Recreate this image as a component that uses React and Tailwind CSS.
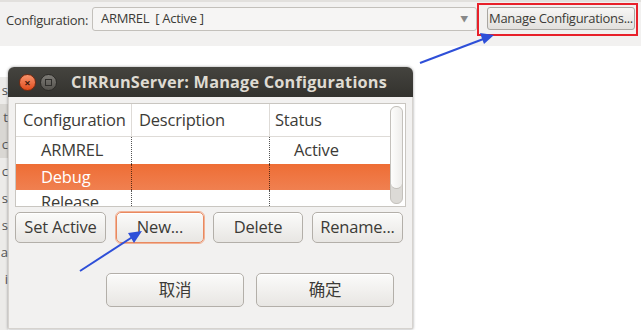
import React from 'react';

const font = { fontFamily: '"Open Sans", "Noto Sans CJK SC", sans-serif' };

function Btn({ children, className = '', focused = false }) {
  return (
    <button
      type="button"
      className={`h-[31px] rounded-[5px] border bg-gradient-to-b from-[#fbfbfa] to-[#e8e6e3] text-[16.5px] tracking-[-0.2px] text-[#3c3b37] shadow-[0_1px_0_#fff_inset] ${
        focused ? 'border-[#e9895f] outline outline-1 outline-[#f1b195]' : 'border-[#b3afa9]'
      } ${className}`}
    >
      {children}
    </button>
  );
}

function Arrows() {
  return (
    <svg className="absolute inset-0 pointer-events-none" width="641" height="330">
      <line x1="420" y1="63" x2="486" y2="38" stroke="#2e4fd8" strokeWidth="2" />
      <polygon points="494,35 480,33 484,44" fill="#2e4fd8" />
      <line x1="80" y1="271" x2="134" y2="236" stroke="#2e4fd8" strokeWidth="2" />
      <polygon points="142,231 128,233 134,243" fill="#2e4fd8" />
    </svg>
  );
}

export default function App() {
  return (
    <div className="relative w-[641px] h-[330px] overflow-hidden bg-white" style={font}>
      {/* eclipse property strip */}
      <div className="h-[46px] bg-[#f2f1f0] border-t-2 border-[#e2e0dd] flex items-start pt-[1px] text-[13px] tracking-[-0.3px] text-[#3c3b37]">
        <span className="ml-[6px] w-[86px] mt-[8px]">Configuration:</span>
        <div className="mt-[4px] w-[385px] h-[24px] rounded-[3px] border border-[#c3c0bb] bg-[#f6f5f4] flex items-center pl-[8px] pr-[8px]">
          <span className="flex-1">ARMREL&nbsp;&nbsp;[ Active ]</span>
          <span className="text-[8px] text-[#888]">▼</span>
        </div>
        <div className="border-2 border-[#e8202a] pl-[8px] pr-[1px] pt-[2px] pb-[4px]">
          <div className="h-[23px] w-[148px] rounded-[3px] border border-[#a9a6a1] bg-gradient-to-b from-[#f7f6f5] to-[#e2e0dd] flex items-center justify-center whitespace-nowrap">
            Manage Configurations...
          </div>
        </div>
      </div>

      <div className="flex mt-[21px]">
        {/* window behind, barely visible */}
        <div className="w-[8px] h-[262px] mt-[10px] bg-[#ecebe9] text-[13px] leading-[27px] text-[#555] flex flex-col items-end">
          <span>s</span>
          <span className="bg-[#d9d7d3] w-full text-right">t</span>
          <span className="bg-[#d9d7d3] w-full text-right">c</span>
          <span>c</span>
          <span>s</span>
          <span>s</span>
          <span>a</span>
          <span>i</span>
        </div>

        {/* dialog */}
        <div className="w-[405px] h-[262px] flex flex-col rounded-t-[6px] overflow-hidden shadow-[0_0_3px_rgba(0,0,0,0.4)]">
          <div className="h-[30px] shrink-0 flex items-center bg-gradient-to-b from-[#45443f] to-[#33322e] px-[11px]">
            <span className="w-[17px] h-[17px] rounded-full bg-gradient-to-b from-[#f7936b] to-[#df4a16] border border-[#7a2a10] flex items-center justify-center text-[11px] font-bold leading-none text-[#3a1a0e]">
              ×
            </span>
            <span className="ml-[4px] w-[17px] h-[17px] rounded-full bg-gradient-to-b from-[#7d7b76] to-[#55534e] border border-[#2c2b28] flex items-center justify-center">
              <span className="w-[7px] h-[7px] border border-[#2f2e2b]" />
            </span>
            <span className="ml-[14px] text-[16.3px] font-bold tracking-[0.2px] text-[#dfdbd2] whitespace-nowrap">
              CIRRunServer: Manage Configurations
            </span>
          </div>

          <div className="flex-1 bg-[#f2f1f0] border-l border-r border-b border-[#d6d3cf] px-[6px] pt-[6px]">
            <div className="h-[104px] border border-[#c9c6c1] bg-white flex overflow-hidden">
              <div className="flex-1 text-[16.5px] tracking-[-0.2px] text-[#3c3b37]">
                <div className="h-[33px] flex border-b border-[#dedbd7]">
                  <div className="w-[116px] pl-[7px] flex items-center border-r border-[#dedbd7] whitespace-nowrap">
                    Configuration
                  </div>
                  <div className="w-[138px] pl-[7px] flex items-center border-r border-[#dedbd7]">Description</div>
                  <div className="flex-1 pl-[5px] flex items-center">Status</div>
                </div>
                <div className="h-[27px] flex">
                  <div className="w-[116px] pl-[25px] flex items-center border-r border-dotted border-[#555]">ARMREL</div>
                  <div className="w-[138px] border-r border-dotted border-[#555]" />
                  <div className="flex-1 pl-[24px] flex items-center">Active</div>
                </div>
                <div className="h-[26px] flex bg-gradient-to-b from-[#ee6d34] to-[#f08050] text-white">
                  <div className="w-[116px] pl-[25px] flex items-center border-r border-dotted border-[#5a2a14]">Debug</div>
                  <div className="w-[138px] border-r border-dotted border-[#5a2a14]" />
                  <div className="flex-1" />
                </div>
                <div className="h-[20px] flex">
                  <div className="w-[116px] pl-[25px] pt-[3px] border-r border-dotted border-[#555] leading-[18px]">Release</div>
                  <div className="w-[138px] border-r border-dotted border-[#555]" />
                  <div className="flex-1" />
                </div>
              </div>
              <div className="w-[15px] py-[2px] pr-[2px] flex">
                <div className="w-full rounded-[6px] bg-[#dcdad6] border border-[#c4c1bc] flex flex-col">
                  <div className="h-[82px] rounded-[6px] bg-gradient-to-r from-[#fdfdfc] to-[#eeedeb] border-b border-[#c4c1bc]" />
                </div>
              </div>
            </div>

            <div className="mt-[5px] flex gap-[9px]">
              <Btn className="w-[91px]">Set Active</Btn>
              <Btn className="w-[88px] ml-[1px]" focused>
                New...
              </Btn>
              <Btn className="w-[90px]">Delete</Btn>
              <Btn className="w-[91px]">Rename...</Btn>
            </div>

            <div className="mt-[30px] flex gap-[12px] pl-[91px]">
              <Btn className="w-[138px] h-[34px]">取消</Btn>
              <Btn className="w-[138px] h-[34px]">确定</Btn>
            </div>
          </div>
        </div>
      </div>

      <Arrows />
    </div>
  );
}
